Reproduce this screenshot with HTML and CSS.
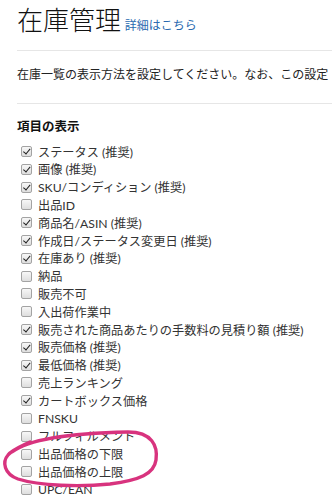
FILE: index.html
```html
<!DOCTYPE html>
<html lang="ja">
<head>
<meta charset="utf-8">
<title>在庫管理</title>
<link rel="stylesheet" href="styles.css">
</head>
<body>
<div class="page">
  <header class="head">
    <h1 class="title">在庫管理 <a class="help" href="#">詳細はこちら</a></h1>
  </header>
  <section class="intro">
    <p class="desc">在庫一覧の表示方法を設定してください。なお、この設定</p>
  </section>
  <section class="fields">
    <h2 class="fields-title">項目の表示</h2>
    <ul class="list">
      <li class="row"><span class="cb on"></span><span>ステータス (推奨)</span></li>
      <li class="row"><span class="cb on"></span><span>画像 (推奨)</span></li>
      <li class="row"><span class="cb on"></span><span>SKU/コンディション (推奨)</span></li>
      <li class="row"><span class="cb"></span><span>出品ID</span></li>
      <li class="row"><span class="cb on"></span><span>商品名/ASIN (推奨)</span></li>
      <li class="row"><span class="cb on"></span><span>作成日/ステータス変更日 (推奨)</span></li>
      <li class="row"><span class="cb on"></span><span>在庫あり (推奨)</span></li>
      <li class="row"><span class="cb"></span><span>納品</span></li>
      <li class="row"><span class="cb"></span><span>販売不可</span></li>
      <li class="row"><span class="cb"></span><span>入出荷作業中</span></li>
      <li class="row"><span class="cb on"></span><span>販売された商品あたりの手数料の見積り額 (推奨)</span></li>
      <li class="row"><span class="cb on"></span><span>販売価格 (推奨)</span></li>
      <li class="row"><span class="cb on"></span><span>最低価格 (推奨)</span></li>
      <li class="row"><span class="cb"></span><span>売上ランキング</span></li>
      <li class="row"><span class="cb on"></span><span>カートボックス価格</span></li>
      <li class="row"><span class="cb"></span><span>FNSKU</span></li>
      <li class="row"><span class="cb"></span><span>フルフィルメント</span></li>
      <li class="row"><span class="cb"></span><span>出品価格の下限</span></li>
      <li class="row"><span class="cb"></span><span>出品価格の上限</span></li>
      <li class="row"><span class="cb"></span><span>UPC/EAN</span></li>
    </ul>
  </section>
  <svg class="mark" width="332" height="500" viewBox="0 0 332 500" aria-hidden="true">
    <path d="M12 452 C 30 438, 80 433, 128 432 C 152 432, 158 446, 156 460 C 154 474, 140 480, 110 484 C 80 487, 40 486, 18 479 C 4 474, 2 462, 8 455 C 12 450, 22 446, 30 442" fill="none" stroke="#d8337e" stroke-width="3.4" stroke-linecap="round"/>
  </svg>
</div>
</body>
</html>
```

FILE: styles.css
```css
html, body {
  margin: 0;
  padding: 0;
  background: #fff;
  overflow: hidden;
}

.page {
  position: relative;
  height: 500px;
  padding-left: 17px;
  font-family: "Lato", "Noto Sans CJK JP", sans-serif;
  color: #333;
}

.head {
  padding-top: 0;
  padding-bottom: 12px;
  border-bottom: 1px solid #e6e6e6;
}

.title {
  margin: 0;
  font-family: "Noto Sans CJK JP", sans-serif;
  font-weight: 300;
  font-size: 26px;
  line-height: 37.6px;
  color: #111;
  white-space: nowrap;
}

.help {
  font-size: 12px;
  font-weight: 400;
  line-height: 1;
  color: #2a6ab0;
  text-decoration: none;
  margin-left: -2px;
}

.intro {
  padding: 13px 0 20px;
  border-bottom: 1px solid #e6e6e6;
}

.desc {
  margin: 0;
  font-family: "Noto Sans CJK JP", sans-serif;
  font-size: 12px;
  line-height: 19px;
  color: #222;
  white-space: nowrap;
}

.fields {
  padding-top: 13.5px;
}

.fields-title {
  margin: 0;
  font-family: "Noto Sans CJK JP", sans-serif;
  font-size: 12.5px;
  font-weight: 700;
  line-height: 18px;
  color: #111;
}

.list {
  list-style: none;
  margin: 7.6px 0 0;
  padding: 0 0 0 4px;
}

.row {
  display: flex;
  align-items: center;
  gap: 6px;
  height: 17.8px;
  font-size: 12.2px;
  color: #333;
  white-space: nowrap;
}

.cb {
  flex: none;
  box-sizing: border-box;
  width: 11px;
  height: 11px;
  border: 1px solid #a3a3a3;
  border-radius: 2px;
  background: linear-gradient(#f7f7f7, #dedede);
  position: relative;
}

.cb.on::after {
  content: "";
  position: absolute;
  left: 3px;
  top: 0px;
  width: 2.5px;
  height: 5.5px;
  border-right: 1.8px solid #1e1e1e;
  border-bottom: 1.8px solid #1e1e1e;
  transform: rotate(40deg);
}

.mark {
  position: absolute;
  left: 0;
  top: 0;
  pointer-events: none;
}
```
